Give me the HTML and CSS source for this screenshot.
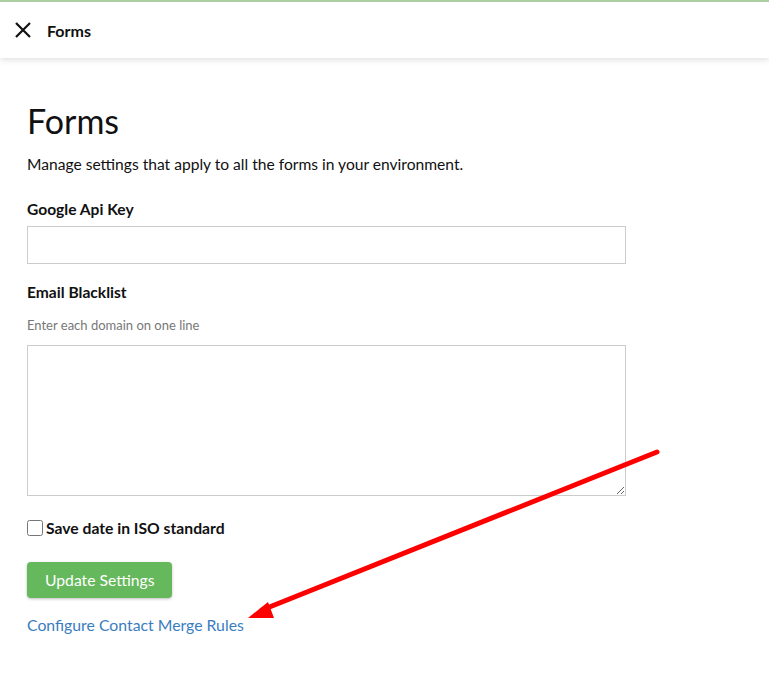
FILE: index.html
```html
<!DOCTYPE html>
<html lang="en">
<head>
    <meta charset="UTF-8">
    <title>Forms</title>
    <link rel="stylesheet" href="styles.css">
</head>
<body>
<div class="topbar">
    <span class="close">
        <svg width="18" height="18" viewBox="0 0 18 18"><path d="M2 2 L16 16 M16 2 L2 16" stroke="#111" stroke-width="2.2" fill="none"/></svg>
    </span>
    <span class="topbar-title">Forms</span>
</div>
<div class="container">
    <h1>Forms</h1>
    <p class="lead">Manage settings that apply to all the forms in your environment.</p>

    <label class="field-label" for="apiKey">Google Api Key</label>
    <input type="text" id="apiKey" class="field">

    <label class="field-label label-blacklist" for="blacklist">Email Blacklist</label>
    <p class="help">Enter each domain on one line</p>
    <textarea id="blacklist" class="field area"></textarea>

    <label class="check">
        <input type="checkbox">
        <span>Save date in ISO standard</span>
    </label>

    <button class="btn">Update Settings</button>

    <a class="link" href="#">Configure Contact Merge Rules</a>
</div>
<!-- annotation arrow -->
<svg class="arrow" width="769" height="689" viewBox="0 0 769 689">
    <line x1="657" y1="452" x2="262" y2="610" stroke="#ff0000" stroke-width="5" stroke-linecap="round"/>
    <polygon points="248,618 268,602 274,618" fill="#ff0000"/>
</svg>
</body>
</html>
```

FILE: styles.css
```css
body {
    margin: 0;
    background-color: #fff;
    font-family: Lato, "Open Sans", Arial, sans-serif;
    color: #111;
}

.topbar {
    display: flex;
    align-items: center;
    height: 56px;
    border-top: 2px solid #a9cfa2;
    box-shadow: 0 2px 6px rgba(0, 0, 0, 0.12);
    padding-left: 14px;
}

.close {
    display: flex;
    width: 18px;
    height: 18px;
    margin-right: 15px;
}

.topbar-title {
    font-size: 16px;
    font-weight: bold;
}

.container {
    padding: 0 27px;
    width: 599px;
}

h1 {
    font-size: 34px;
    font-weight: normal;
    margin: 41px 0 0;
    line-height: 44px;
}

.lead {
    font-size: 15.6px;
    margin: 10px 0 0;
    line-height: 22px;
}

.field-label {
    display: block;
    font-size: 15.6px;
    font-weight: bold;
    margin-top: 23px;
    line-height: 22px;
}

.label-blacklist {
    margin-top: 17px;
}

.field {
    display: block;
    box-sizing: border-box;
    width: 599px;
    height: 38px;
    margin-top: 6px;
    border: 1px solid #ccc;
    font-family: inherit;
    font-size: 14px;
}

.help {
    font-size: 13px;
    color: #777;
    margin: 14px 0 0;
    line-height: 16px;
}

.area {
    height: 151px;
    margin-top: 12px;
    resize: vertical;
}

.check {
    display: flex;
    align-items: center;
    margin-top: 21px;
    font-size: 15.7px;
    font-weight: bold;
    line-height: 22px;
}

.check input {
    margin: 0 3px 0 0;
    width: 16px;
    height: 16px;
}

.btn {
    display: block;
    margin-top: 23px;
    height: 36px;
    padding: 0 18px;
    background-color: #65b85c;
    color: #fff;
    border: none;
    border-radius: 4px;
    font-family: inherit;
    font-size: 15.7px;
    box-shadow: 0 1px 3px rgba(0, 0, 0, 0.25);
}

.link {
    display: inline-block;
    margin-top: 17px;
    color: #3a7dbf;
    text-decoration: none;
    font-size: 15.8px;
    line-height: 20px;
}

.arrow {
    position: absolute;
    left: 0;
    top: 0;
    pointer-events: none;
}
```
